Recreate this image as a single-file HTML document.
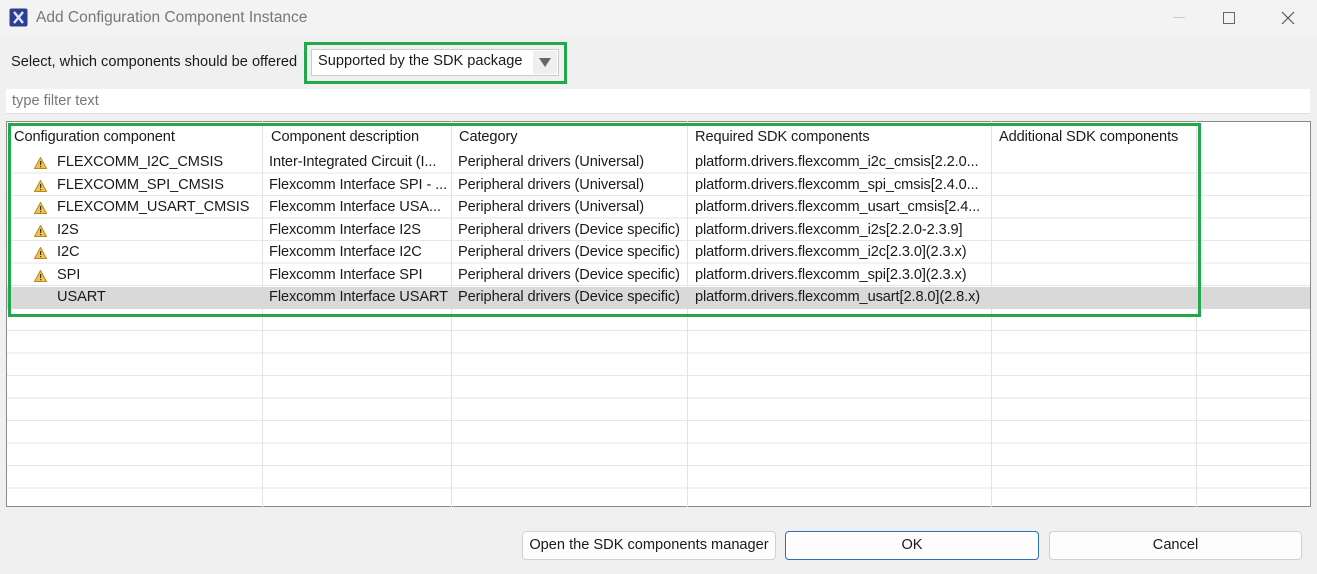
<!DOCTYPE html>
<html><head><style>
*{margin:0;padding:0;box-sizing:border-box}
body{width:1317px;height:574px;background:#f0f0f0;font-family:"Liberation Sans",sans-serif;font-size:14.6px;color:#1a1a1a;position:relative;overflow:hidden}
.a{position:absolute;white-space:nowrap}
.title{left:0;top:0;width:1317px;height:38px;background:#f3f3f3}
.grid{left:6px;top:121px;width:1305px;height:386px;background:#fff;border:1px solid #8a8a8a;
background-image:repeating-linear-gradient(to bottom,transparent 0,transparent 21.5px,#e6e6e6 21.5px,#e6e6e6 22.5px);background-position:0 29px;background-repeat:no-repeat;background-size:100% 357px}
.vl{position:absolute;top:121px;height:386px;width:1px;background:#e3e3e3}
.row{position:absolute;left:7px;width:1303px;height:22px}
.row span{position:absolute;top:2px;letter-spacing:-0.1px}
.warn{position:absolute;left:27px;top:5px}
.btn{position:absolute;top:531px;height:29px;background:#fdfdfd;border:1px solid #d0d0d0;border-radius:4px;text-align:center;line-height:27px}
</style></head><body>
<div class="a title"></div>
<svg class="a" style="left:9px;top:8px" width="19" height="19" viewBox="0 0 19 19"><rect x="0.5" y="0.5" width="18" height="18" rx="2" fill="#2c3f8f"/><path d="M5 4 L14 15 M14 4 L5 15" stroke="#dfe6ff" stroke-width="2.4"/></svg>
<div class="a" style="left:36px;top:9px;font-size:15.5px;color:#777">Add Configuration Component Instance</div>
<div class="a" style="left:1173px;top:17px;width:12px;height:1px;background:#ccc"></div>
<div class="a" style="left:1223px;top:12px;width:12px;height:12px;border:1px solid #666"></div>
<svg class="a" style="left:1281px;top:11px" width="14" height="14"><path d="M1 1L13 13M13 1L1 13" stroke="#555" stroke-width="1.2"/></svg>

<div class="a" style="left:11px;top:54px">Select, which components should be offered</div>
<div class="a" style="left:304px;top:42px;width:263px;height:42px;border:3px solid #22a84a"></div>
<div class="a" style="left:311px;top:49px;width:248px;height:27px;background:#fff;border:1px solid #ccc"></div>
<div class="a" style="left:318px;top:53px">Supported by the SDK package</div>
<div class="a" style="left:533px;top:51px;width:24px;height:23px;background:#efefef"></div>
<svg class="a" style="left:539px;top:58px" width="12" height="9"><path d="M0 0H12L6 9Z" fill="#666"/></svg>

<div class="a" style="left:6px;top:89px;width:1304px;height:25px;background:#fff;border-bottom:1px solid #ddd"></div>
<div class="a" style="left:12px;top:93px;color:#777">type filter text</div>

<div class="a grid"></div>
<div class="vl" style="left:262px"></div><div class="vl" style="left:451px"></div><div class="vl" style="left:687px"></div><div class="vl" style="left:991px"></div><div class="vl" style="left:1196px"></div>
<div class="a" style="left:7px;top:287px;width:1303px;height:22px;background:#d9d9d9"></div>

<div class="row" style="top:127px"><span style="left:7px">Configuration component</span><span style="left:264px">Component description</span><span style="left:452px">Category</span><span style="left:688px">Required SDK components</span><span style="left:992px">Additional SDK components</span></div>

<div class="row" style="top:152px"><svg class="warn" width="13" height="12"><path d="M6.5 0.5L12.5 11.5H0.5Z" fill="#f2c14e" stroke="#b88a1c"/><rect x="6" y="4" width="1.2" height="4" fill="#333"/><rect x="6" y="9" width="1.2" height="1.2" fill="#333"/></svg><span style="left:50px">FLEXCOMM_I2C_CMSIS</span><span style="left:262px">Inter-Integrated Circuit (I...</span><span style="left:451px">Peripheral drivers (Universal)</span><span style="left:688px">platform.drivers.flexcomm_i2c_cmsis[2.2.0...</span></div>
<div class="row" style="top:175px"><svg class="warn" width="13" height="12"><path d="M6.5 0.5L12.5 11.5H0.5Z" fill="#f2c14e" stroke="#b88a1c"/><rect x="6" y="4" width="1.2" height="4" fill="#333"/><rect x="6" y="9" width="1.2" height="1.2" fill="#333"/></svg><span style="left:50px">FLEXCOMM_SPI_CMSIS</span><span style="left:262px">Flexcomm Interface SPI - ...</span><span style="left:451px">Peripheral drivers (Universal)</span><span style="left:688px">platform.drivers.flexcomm_spi_cmsis[2.4.0...</span></div>
<div class="row" style="top:197px"><svg class="warn" width="13" height="12"><path d="M6.5 0.5L12.5 11.5H0.5Z" fill="#f2c14e" stroke="#b88a1c"/><rect x="6" y="4" width="1.2" height="4" fill="#333"/><rect x="6" y="9" width="1.2" height="1.2" fill="#333"/></svg><span style="left:50px">FLEXCOMM_USART_CMSIS</span><span style="left:262px">Flexcomm Interface USA...</span><span style="left:451px">Peripheral drivers (Universal)</span><span style="left:688px">platform.drivers.flexcomm_usart_cmsis[2.4...</span></div>
<div class="row" style="top:220px"><svg class="warn" width="13" height="12"><path d="M6.5 0.5L12.5 11.5H0.5Z" fill="#f2c14e" stroke="#b88a1c"/><rect x="6" y="4" width="1.2" height="4" fill="#333"/><rect x="6" y="9" width="1.2" height="1.2" fill="#333"/></svg><span style="left:50px">I2S</span><span style="left:262px">Flexcomm Interface I2S</span><span style="left:451px">Peripheral drivers (Device specific)</span><span style="left:688px">platform.drivers.flexcomm_i2s[2.2.0-2.3.9]</span></div>
<div class="row" style="top:242px"><svg class="warn" width="13" height="12"><path d="M6.5 0.5L12.5 11.5H0.5Z" fill="#f2c14e" stroke="#b88a1c"/><rect x="6" y="4" width="1.2" height="4" fill="#333"/><rect x="6" y="9" width="1.2" height="1.2" fill="#333"/></svg><span style="left:50px">I2C</span><span style="left:262px">Flexcomm Interface I2C</span><span style="left:451px">Peripheral drivers (Device specific)</span><span style="left:688px">platform.drivers.flexcomm_i2c[2.3.0](2.3.x)</span></div>
<div class="row" style="top:265px"><svg class="warn" width="13" height="12"><path d="M6.5 0.5L12.5 11.5H0.5Z" fill="#f2c14e" stroke="#b88a1c"/><rect x="6" y="4" width="1.2" height="4" fill="#333"/><rect x="6" y="9" width="1.2" height="1.2" fill="#333"/></svg><span style="left:50px">SPI</span><span style="left:262px">Flexcomm Interface SPI</span><span style="left:451px">Peripheral drivers (Device specific)</span><span style="left:688px">platform.drivers.flexcomm_spi[2.3.0](2.3.x)</span></div>
<div class="row" style="top:287px"><span style="left:50px">USART</span><span style="left:262px">Flexcomm Interface USART</span><span style="left:451px">Peripheral drivers (Device specific)</span><span style="left:688px">platform.drivers.flexcomm_usart[2.8.0](2.8.x)</span></div>

<div class="a" style="left:8px;top:123px;width:1193px;height:194px;border:3px solid #22a84a"></div>

<div class="btn" style="left:522px;width:254px">Open the SDK components manager</div>
<div class="btn" style="left:785px;width:254px;border-color:#2a6fb8">OK</div>
<div class="btn" style="left:1049px;width:253px">Cancel</div>
</body></html>
